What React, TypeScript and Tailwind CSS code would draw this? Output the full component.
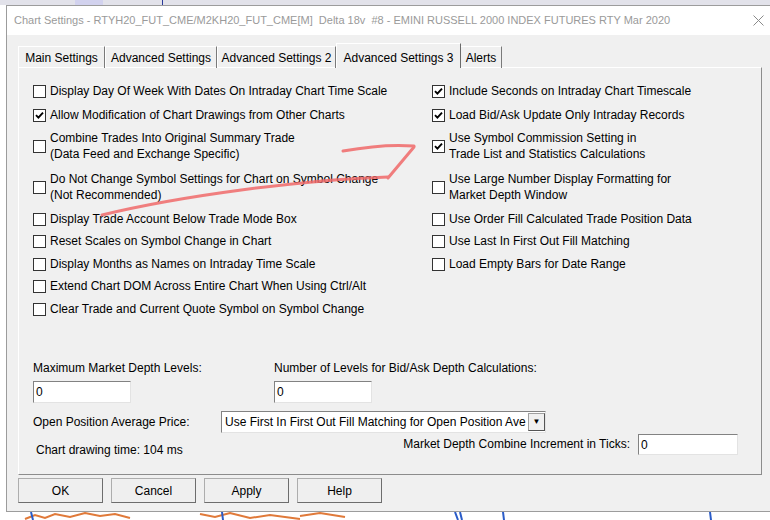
type Opt = { label: string[]; checked?: boolean }

const left: Opt[] = [
  { label: ['Display Day Of Week With Dates On Intraday Chart Time Scale'] },
  { label: ['Allow Modification of Chart Drawings from Other Charts'], checked: true },
  { label: ['Combine Trades Into Original Summary Trade', '(Data Feed and Exchange Specific)'] },
  { label: ['Do Not Change Symbol Settings for Chart on Symbol Change', '(Not Recommended)'] },
  { label: ['Display Trade Account Below Trade Mode Box'] },
  { label: ['Reset Scales on Symbol Change in Chart'] },
  { label: ['Display Months as Names on Intraday Time Scale'] },
  { label: ['Extend Chart DOM Across Entire Chart When Using Ctrl/Alt'] },
  { label: ['Clear Trade and Current Quote Symbol on Symbol Change'] },
]

const right: Opt[] = [
  { label: ['Include Seconds on Intraday Chart Timescale'], checked: true },
  { label: ['Load Bid/Ask Update Only Intraday Records'], checked: true },
  { label: ['Use Symbol Commission Setting in', 'Trade List and Statistics Calculations'], checked: true },
  { label: ['Use Large Number Display Formatting for', 'Market Depth Window'] },
  { label: ['Use Order Fill Calculated Trade Position Data'] },
  { label: ['Use Last In First Out Fill Matching'] },
  { label: ['Load Empty Bars for Date Range'] },
]

const rowGaps = ['', 'mt-[8px]', 'mt-[7px]', 'mt-[9px]', 'mt-[8px]', 'mt-[6px]', 'mt-[7px]', 'mt-[6px]', 'mt-[7px]']

function Box({ checked }: { checked?: boolean }) {
  return (
    <span className="flex h-[13px] w-[13px] shrink-0 items-center justify-center border border-[#333] bg-white">
      {checked && (
        <svg width="9" height="9" viewBox="0 0 9 9">
          <path d="M1 4.2 L3.4 6.6 L8 1.6" stroke="#000" strokeWidth="1.9" fill="none" />
        </svg>
      )}
    </span>
  )
}

function Check({ opt }: { opt?: Opt }) {
  if (!opt) return null
  return (
    <div className="flex items-center gap-[4px]">
      <Box checked={opt.checked} />
      <div className="leading-[16px]">
        {opt.label.map((l) => (
          <div key={l} className="whitespace-nowrap">{l}</div>
        ))}
      </div>
    </div>
  )
}

function Field({ className }: { className: string }) {
  return (
    <div
      className={`flex items-center border border-[#e3e3e3] border-l-[#828282] border-t-[#828282] bg-white pl-[2px] ${className}`}
    >
      0
    </div>
  )
}

const tabs = [
  { name: 'Main Settings', w: 'w-[87px]' },
  { name: 'Advanced Settings', w: 'w-[112px]' },
  { name: 'Advanced Settings 2', w: 'w-[119px]' },
]

export default function App() {
  return (
    <div className="relative h-[520px] w-[770px] overflow-hidden bg-white font-['Liberation_Sans',Arial,sans-serif] text-[12px] text-black">
      <div className="relative h-[5px] bg-[#e2e2ea]">
        <div className="absolute left-[75px] top-0 h-[5px] w-[28px] bg-[#d2d2ee]" />
        <div className="absolute left-[162px] top-0 h-[5px] w-px bg-[#2a3a9a]" />
      </div>
      <div className="flex">
        <div className="w-[6px]" />
        <div className="flex h-[507px] w-[764px] flex-col border-b border-l border-t border-[#9c9c9c] bg-[#f0f0f0]">
          <div className="flex h-[29px] items-center justify-between bg-white pl-[7px] pr-[6px]">
            <span className="whitespace-nowrap text-[11px] text-[#9a9a9a]">
              Chart Settings - RTYH20_FUT_CME/M2KH20_FUT_CME[M]&nbsp; Delta 18v&nbsp; #8 - EMINI RUSSELL 2000 INDEX FUTURES RTY Mar 2020
            </span>
            <svg width="11" height="11" viewBox="0 0 11 11">
              <path d="M0.5 0.5 L10.5 10.5 M10.5 0.5 L0.5 10.5" stroke="#8a8a8a" strokeWidth="1" />
            </svg>
          </div>

          <div className="pl-[11px] pt-[8px]">
            <div className="relative z-10 flex h-[25px] items-end">
              {tabs.map((t) => (
                <div
                  key={t.name}
                  className={`flex h-[22px] items-center justify-center border-l border-r border-t border-l-white border-r-[#7a7a7a] border-t-white ${t.w}`}
                >
                  {t.name}
                </div>
              ))}
              <div className="flex h-[25px] w-[125px] items-start justify-center border-l border-r border-t border-l-white border-r-[#6a6a6a] border-t-white bg-[#f0f0f0] pt-[5px]">
                Advanced Settings 3
              </div>
              <div className="flex h-[22px] w-[41px] items-center justify-center border-r border-t border-r-[#7a7a7a] border-t-white">
                Alerts
              </div>
            </div>

            <div className="-mt-px flex h-[408px] w-[744px] flex-col border border-[#8c8c8c] border-l-white border-t-white pl-[14px] pt-[15px]">
              <div className="flex flex-col">
                {left.map((l, i) => (
                  <div key={i} className={`flex items-center ${rowGaps[i]}`}>
                    <div className="w-[399px]">
                      <Check opt={l} />
                    </div>
                    <Check opt={right[i]} />
                  </div>
                ))}
              </div>

              <div className="mt-[43px] flex">
                <div className="w-[241px]">
                  <div className="leading-[16px]">Maximum Market Depth Levels:</div>
                  <Field className="mt-[5px] h-[22px] w-[98px]" />
                </div>
                <div>
                  <div className="leading-[16px]">Number of Levels for Bid/Ask Depth Calculations:</div>
                  <Field className="mt-[5px] h-[22px] w-[98px]" />
                </div>
              </div>

              <div className="mt-[8px] flex items-center">
                <div className="w-[188px] leading-[16px]">Open Position Average Price:</div>
                <div className="flex h-[22px] w-[325px] items-center border border-[#e3e3e3] border-l-[#828282] border-t-[#828282] bg-white">
                  <div className="flex-1 overflow-hidden whitespace-nowrap pl-[3px]">
                    Use First In First Out Fill Matching for Open Position Ave
                  </div>
                  <div className="flex h-[18px] w-[17px] items-center justify-center border border-[#a0a0a0] border-b-[#555] border-r-[#555] bg-[#f0f0f0] text-[8px]">
                    ▼
                  </div>
                </div>
              </div>

              <div className="mt-px flex items-start">
                <div className="flex w-[597px] justify-between">
                  <div className="mt-[8px] pl-[3px] leading-[16px]">Chart drawing time: 104 ms</div>
                  <div className="mt-[2px] leading-[16px]">Market Depth Combine Increment in Ticks:</div>
                </div>
                <Field className="ml-[8px] h-[21px] w-[100px]" />
              </div>
            </div>

            <div className="mt-[3px] flex gap-[8px]">
              {['OK', 'Cancel', 'Apply', 'Help'].map((b) => (
                <div
                  key={b}
                  className="flex h-[25px] w-[85px] items-center justify-center border border-[#adadad] border-b-[#6d6d6d] border-r-[#6d6d6d] bg-[#efefef]"
                >
                  {b}
                </div>
              ))}
            </div>
          </div>
        </div>
      </div>

      <svg className="h-[8px] w-[770px]" viewBox="0 0 770 8">
        <path d="M25 7 L35 3 L45 6 L55 2 L70 5 L85 1 L100 4 L115 2 L130 6" stroke="#e07a3a" strokeWidth="2" fill="none" />
        <path d="M200 2 L215 5 L230 1 L250 6 L270 3 L300 7" stroke="#e07a3a" strokeWidth="2" fill="none" />
        <path d="M300 4 L320 1 L345 5" stroke="#e07a3a" strokeWidth="2" fill="none" />
        <path d="M31 0 L33 8 M222 0 L223 8 M455 0 L458 8 M460 0 L462 8 M503 0 L504 8 M710 0 L711 8" stroke="#2a5cc8" strokeWidth="2" />
      </svg>

      <svg className="pointer-events-none absolute left-0 top-0" width="770" height="520" viewBox="0 0 770 520">
        <g stroke="#f06a6a" strokeWidth="3" strokeLinecap="round" fill="none" opacity="0.85">
          <path d="M102 215 C 180 196, 300 180, 388 177" />
          <path d="M388 178 L 414 147" />
          <path d="M343 151 C 365 147, 390 144, 414 146" />
        </g>
      </svg>
    </div>
  )
}
